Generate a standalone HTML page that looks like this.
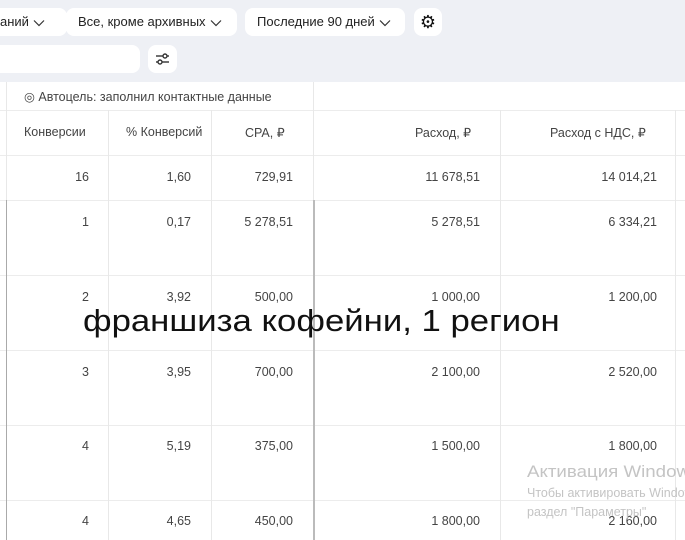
<!DOCTYPE html>
<html><head><meta charset="utf-8"><style>
body{margin:0;width:685px;height:540px;overflow:hidden;background:#fff;font-family:"Liberation Sans",sans-serif;color:#333;position:relative}
.top{position:absolute;left:0;top:0;width:685px;height:82px;background:#eef0f5}
.btn{position:absolute;background:#fff;border-radius:8px;height:28px;top:8px;font-size:13px;line-height:28px;color:#222;white-space:nowrap}
.abs{position:absolute}
.vl{position:absolute;width:1px;background:#e8e8e8}
.hl{position:absolute;height:1px;background:#ececec;left:0;width:685px}
.c{position:absolute;font-size:12.5px;color:#444;text-align:right}
.ch{display:inline-block;vertical-align:middle;margin-left:4px}
</style></head><body>
<div class="top"></div>
<div class="btn" style="left:-10px;width:67px;padding-left:10px">аний<svg class="ch" width="12" height="8"><path d="M1 1.5L6 6.5L11 1.5" stroke="#333" fill="none" stroke-width="1.2"/></svg></div>
<div class="btn" style="left:66px;width:171px;padding-left:12px;box-sizing:border-box">Все, кроме архивных<svg class="ch" width="12" height="8"><path d="M1 1.5L6 6.5L11 1.5" stroke="#333" fill="none" stroke-width="1.2"/></svg></div>
<div class="btn" style="left:245px;width:160px;padding-left:12px;box-sizing:border-box">Последние 90 дней<svg class="ch" width="12" height="8"><path d="M1 1.5L6 6.5L11 1.5" stroke="#333" fill="none" stroke-width="1.2"/></svg></div>
<div class="btn" style="left:414px;width:28px;text-align:center;font-size:18px;color:#111">&#9881;</div>
<div class="btn" style="left:-10px;top:45px;width:150px"></div>
<div class="btn" style="left:148px;top:45px;width:29px">
<svg width="29" height="28" viewBox="0 0 29 28"><g stroke="#333" stroke-width="1.4" fill="none"><line x1="8" y1="11" x2="21" y2="11"/><line x1="8" y1="17" x2="21" y2="17"/><circle cx="17" cy="11" r="2" fill="#fff"/><circle cx="12" cy="17" r="2" fill="#fff"/></g></svg></div>

<div class="hl" style="top:110px"></div>
<div class="hl" style="top:155px"></div>
<div class="hl" style="top:200px"></div>
<div class="hl" style="top:275px"></div>
<div class="hl" style="top:350px"></div>
<div class="hl" style="top:425px"></div>
<div class="hl" style="top:500px"></div>
<div class="vl" style="left:6px;top:82px;height:118px"></div>
<div class="vl" style="left:6px;top:200px;height:340px;background:#aaa"></div>
<div class="vl" style="left:108px;top:110px;height:430px"></div>
<div class="vl" style="left:211px;top:110px;height:430px"></div>
<div class="vl" style="left:313px;top:82px;height:118px"></div>
<div class="vl" style="left:313px;top:200px;height:340px;background:#bbb;width:2px"></div>
<div class="vl" style="left:500px;top:110px;height:430px"></div>
<div class="vl" style="left:675px;top:110px;height:430px"></div>

<div class="abs" style="left:24px;top:89px;font-size:12.5px;color:#444">◎ Автоцель: заполнил контактные данные</div>
<div class="abs" style="left:24px;top:125px;font-size:12.5px;color:#444">Конверсии</div>
<div class="abs" style="left:126px;top:125px;font-size:12.5px;color:#444">% Конверсий</div>
<div class="abs" style="left:245px;top:125px;font-size:12.5px;color:#444">CPA, ₽</div>
<div class="abs" style="left:415px;top:125px;font-size:12.5px;color:#444">Расход, ₽</div>
<div class="abs" style="left:550px;top:125px;font-size:12.5px;color:#444">Расход с НДС, ₽</div>

<div class="c" style="right:596px;top:170px">16</div><div class="c" style="right:494px;top:170px">1,60</div><div class="c" style="right:392px;top:170px">729,91</div><div class="c" style="right:205px;top:170px">11 678,51</div><div class="c" style="right:28px;top:170px">14 014,21</div>
<div class="c" style="right:596px;top:215px">1</div><div class="c" style="right:494px;top:215px">0,17</div><div class="c" style="right:392px;top:215px">5 278,51</div><div class="c" style="right:205px;top:215px">5 278,51</div><div class="c" style="right:28px;top:215px">6 334,21</div>
<div class="c" style="right:596px;top:290px">2</div><div class="c" style="right:494px;top:290px">3,92</div><div class="c" style="right:392px;top:290px">500,00</div><div class="c" style="right:205px;top:290px">1 000,00</div><div class="c" style="right:28px;top:290px">1 200,00</div>
<div class="c" style="right:596px;top:365px">3</div><div class="c" style="right:494px;top:365px">3,95</div><div class="c" style="right:392px;top:365px">700,00</div><div class="c" style="right:205px;top:365px">2 100,00</div><div class="c" style="right:28px;top:365px">2 520,00</div>
<div class="c" style="right:596px;top:439px">4</div><div class="c" style="right:494px;top:439px">5,19</div><div class="c" style="right:392px;top:439px">375,00</div><div class="c" style="right:205px;top:439px">1 500,00</div><div class="c" style="right:28px;top:439px">1 800,00</div>
<div class="c" style="right:596px;top:514px">4</div><div class="c" style="right:494px;top:514px">4,65</div><div class="c" style="right:392px;top:514px">450,00</div><div class="c" style="right:205px;top:514px">1 800,00</div><div class="c" style="right:28px;top:514px">2 160,00</div>

<div class="abs" style="left:83px;top:303px;font-size:31px;color:#111;white-space:nowrap;transform:scaleX(1.12);transform-origin:left top">франшиза кофейни, 1 регион</div>
<div class="abs" style="left:527px;top:462px;font-size:17px;color:#c4c4c4;white-space:nowrap;transform:scaleX(1.1);transform-origin:left top">Активация Windows</div>
<div class="abs" style="left:527px;top:486px;font-size:12.5px;color:#c4c4c4;white-space:nowrap">Чтобы активировать Windows</div>
<div class="abs" style="left:527px;top:505px;font-size:12.5px;color:#c4c4c4;white-space:nowrap">раздел "Параметры"</div>
</body></html>
